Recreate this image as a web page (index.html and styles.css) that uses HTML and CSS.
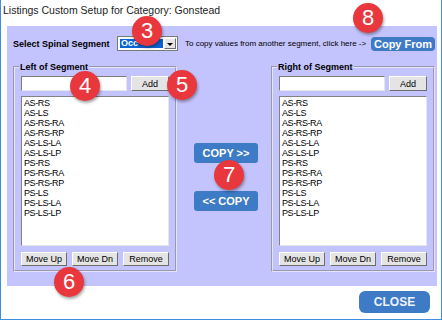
FILE: index.html
```html
<!DOCTYPE html>
<html lang="en">
<head>
    <meta charset="UTF-8" />
    <title>Listings Custom Setup</title>
    <link rel="stylesheet" href="styles.css">
</head>
<body>
    <div class="window">
        <div class="titlebar">Listings Custom Setup for Category: Gonstead</div>
        <div class="panel">
            <div class="top-row">
                <span class="seg-label">Select Spinal Segment</span>
                <div class="combo">
                    <span class="combo-value"><span class="combo-sel">Occ</span></span>
                    <span class="combo-arrow"></span>
                </div>
                <span class="hint">To copy values from another segment, click here -&gt;</span>
                <button class="blue-btn copy-from">Copy From</button>
            </div>
            <div class="groups">
                <fieldset class="group group-left">
                    <legend>Left of Segment</legend>
                    <div class="add-row">
                        <input type="text" class="seg-input" />
                        <button class="win-btn add-btn">Add</button>
                    </div>
                    <ul class="listbox">
                        <li>AS-RS</li>
                        <li>AS-LS</li>
                        <li>AS-RS-RA</li>
                        <li>AS-RS-RP</li>
                        <li>AS-LS-LA</li>
                        <li>AS-LS-LP</li>
                        <li>PS-RS</li>
                        <li>PS-RS-RA</li>
                        <li>PS-RS-RP</li>
                        <li>PS-LS</li>
                        <li>PS-LS-LA</li>
                        <li>PS-LS-LP</li>
                    </ul>
                    <div class="btn-row">
                        <button class="win-btn">Move Up</button>
                        <button class="win-btn">Move Dn</button>
                        <button class="win-btn">Remove</button>
                    </div>
                </fieldset>
                <div class="copy-col">
                    <button class="blue-btn copy-btn">COPY &gt;&gt;</button>
                    <button class="blue-btn copy-btn">&lt;&lt; COPY</button>
                </div>
                <fieldset class="group group-right">
                    <legend>Right of Segment</legend>
                    <div class="add-row">
                        <input type="text" class="seg-input" />
                        <button class="win-btn add-btn">Add</button>
                    </div>
                    <ul class="listbox">
                        <li>AS-RS</li>
                        <li>AS-LS</li>
                        <li>AS-RS-RA</li>
                        <li>AS-RS-RP</li>
                        <li>AS-LS-LA</li>
                        <li>AS-LS-LP</li>
                        <li>PS-RS</li>
                        <li>PS-RS-RA</li>
                        <li>PS-RS-RP</li>
                        <li>PS-LS</li>
                        <li>PS-LS-LA</li>
                        <li>PS-LS-LP</li>
                    </ul>
                    <div class="btn-row">
                        <button class="win-btn">Move Up</button>
                        <button class="win-btn">Move Dn</button>
                        <button class="win-btn">Remove</button>
                    </div>
                </fieldset>
            </div>
        </div>
        <div class="footer">
            <button class="blue-btn close-btn">CLOSE</button>
        </div>

        <span class="badge badge-3">3</span>
        <span class="badge badge-8">8</span>
        <span class="badge badge-4">4</span>
        <span class="badge badge-5">5</span>
        <span class="badge badge-6">6</span>
        <span class="badge badge-7">7</span>
    </div>
</body>
</html>
```
FILE: styles.css
```css
* {
    box-sizing: border-box;
}
body {
    margin: 0;
    font-family: 'Liberation Sans', Arial, sans-serif;
    color: #000;
    background: #fff;
}
.window {
    position: relative;
    width: 442px;
    height: 320px;
    border: 1px solid #3c8ede;
    border-top: 0;
    background: #fff;
}
.titlebar {
    height: 26px;
    padding: 4px 0 0 2px;
    font-size: 10.5px;
    line-height: 13px;
    color: #222;
}
.panel {
    height: 260px;
    margin: 0 4px 0 6px;
    padding: 10px 2px 0 6px;
    background: #c3c3fd;
}
.top-row {
    display: flex;
    align-items: center;
    height: 15px;
}
.seg-label {
    width: 104px;
    font-size: 9px;
    font-weight: bold;
}
.combo {
    display: flex;
    width: 61px;
    height: 15px;
    padding: 1px;
    border: 1px solid #7a7a7a;
    background: #fff;
}
.combo-value {
    flex: 1;
    padding: 1px;
}
.combo-sel {
    display: block;
    height: 100%;
    padding-left: 1px;
    background: #0a64d6;
    color: #fff;
    font-size: 9px;
    font-weight: bold;
    line-height: 9px;
}
.combo-arrow {
    position: relative;
    width: 12px;
    background: #e6e6e6;
    border: 1px solid;
    border-color: #fff #6d6d6d #6d6d6d #fff;
}
.combo-arrow::after {
    content: '';
    position: absolute;
    left: 2px;
    top: 4px;
    border-left: 3px solid transparent;
    border-right: 3px solid transparent;
    border-top: 3px solid #000;
}
.hint {
    margin-left: 7px;
    font-size: 8px;
}
.blue-btn {
    border: 0;
    padding: 0;
    background: #3d7bc6;
    color: #fff;
    font-family: inherit;
    font-weight: bold;
    cursor: pointer;
}
.copy-from {
    margin-left: auto;
    width: 64px;
    height: 14px;
    border-radius: 4px;
    font-size: 11px;
    line-height: 14px;
}
.groups {
    display: flex;
    margin-top: 10px;
}
.group {
    margin: 0;
    height: 211px;
    padding: 3px 6px 0 6px;
    border: 2px groove #e4e4ff;
}
.group-left {
    width: 162px;
}
.group-right {
    width: 160px;
}
.group legend {
    padding: 0 1px;
    margin-left: -2px;
    font-size: 9px;
    font-weight: bold;
    line-height: 12px;
}
.add-row {
    display: flex;
    gap: 4px;
    height: 15px;
}
.seg-input {
    width: 106px;
    height: 15px;
    padding: 0;
    border: 1px solid;
    border-color: #7d7d7d #e6e6e6 #e6e6e6 #7d7d7d;
    background: #fff;
}
.win-btn {
    padding: 0;
    background: #e4e4e4;
    border: 1px solid;
    border-color: #fff #6d6d6d #6d6d6d #fff;
    font-family: inherit;
    font-size: 9px;
    color: #000;
}
.add-btn {
    width: 38px;
}
.listbox {
    height: 150px;
    margin: 5px 0 0 0;
    padding: 1px 2px;
    list-style: none;
    border: 1px solid;
    border-color: #828282 #e6e6e6 #e6e6e6 #828282;
    background: #fff;
    font-size: 9px;
    line-height: 10px;
    letter-spacing: -0.4px;
    overflow: hidden;
}
.btn-row {
    display: flex;
    justify-content: space-between;
    margin-top: 6px;
}
.btn-row .win-btn {
    width: 46px;
    height: 14px;
}
.copy-col {
    display: flex;
    flex-direction: column;
    gap: 28px;
    width: 99px;
    padding: 82px 13px 0 17px;
}
.copy-btn {
    height: 20px;
    border-radius: 3px;
    font-size: 11px;
}
.footer {
    display: flex;
    justify-content: flex-end;
    padding: 5px 11px 0 0;
}
.close-btn {
    width: 71px;
    height: 22px;
    border-radius: 6px;
    font-size: 12px;
    color: #eef2fa;
}
.badge {
    position: absolute;
    width: 30px;
    height: 30px;
    border-radius: 50%;
    background: #e8383d;
    color: #fff;
    font-size: 22px;
    line-height: 30px;
    text-align: center;
    box-shadow: 1px 2px 3px rgba(0, 0, 0, 0.35);
}
.badge-3 { left: 131px; top: 16px; }
.badge-8 { left: 352px; top: 3px; }
.badge-4 { left: 69px; top: 71px; }
.badge-5 { left: 166px; top: 70px; }
.badge-6 { left: 53px; top: 267px; }
.badge-7 { left: 213px; top: 160px; }
```
